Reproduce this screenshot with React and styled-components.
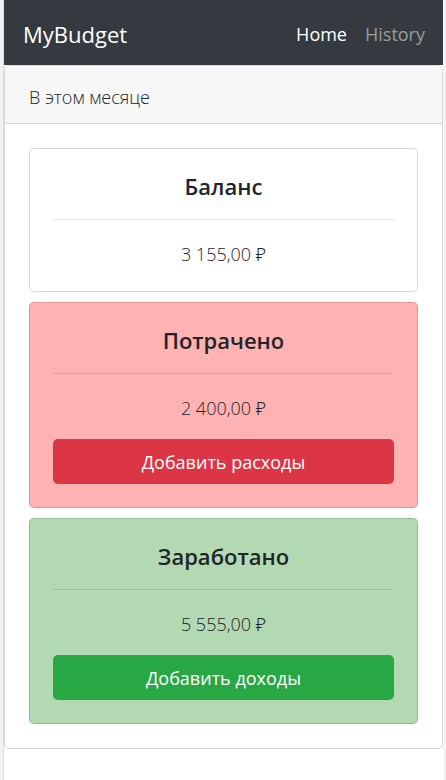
import React from "react";
import styled, { createGlobalStyle } from "styled-components";

const GlobalStyle = createGlobalStyle`
  *, *::before, *::after { box-sizing: border-box; }
  body {
    margin: 0;
    background: #f2f2f2;
    color: #212529;
    font-family: "Open Sans", "Noto Sans", sans-serif;
    font-size: 18px;
    font-weight: 300;
    line-height: 28px;
  }
`;

const Page = styled.div`
  min-height: 100vh;
  margin: 0 2px 0 3px;
  background: #fff;
  border-left: 1px solid #dcdcdc;
  border-right: 1px solid #fafafa;
`;

const Navbar = styled.nav`
  display: flex;
  align-items: center;
  justify-content: space-between;
  padding: 17px 18px 14px 19px;
  background: #343a40;
`;

const Brand = styled.a`
  color: #fff;
  font-size: 22px;
  font-weight: 400;
  line-height: 34px;
  text-decoration: none;
`;

const NavLinks = styled.div`
  display: flex;
  gap: 18px;
`;

const NavLink = styled.a`
  color: ${({ $active }) => ($active ? "#fff" : "#999c9f")};
  font-weight: 400;
  text-decoration: none;
`;

const Panel = styled.main`
  border: 1px solid #d8d8d8;
  border-radius: 5px;
  overflow: hidden;
`;

const PanelHeader = styled.header`
  padding: 17px 24px 12px;
  background: #f7f7f7;
  border-bottom: 1px solid #d8d8d8;
`;

const PanelBody = styled.div`
  display: flex;
  flex-direction: column;
  gap: 10px;
  padding: 24px;
`;

const SummaryCard = styled.section`
  padding: 24px 23px 23px;
  background: ${({ $background }) => $background};
  border: 1px solid rgba(0, 0, 0, 0.15);
  border-radius: 5px;
  text-align: center;
`;

const CardTitle = styled.h2`
  margin: 0;
  font-size: 22px;
  font-weight: 600;
  line-height: 27px;
`;

const Divider = styled.hr`
  margin: 19px 0 20px;
  border: 0;
  border-top: 1px solid rgba(0, 0, 0, 0.1);
`;

const Amount = styled.p`
  margin: 0;
`;

const ActionButton = styled.button`
  display: block;
  width: 100%;
  margin-top: 17px;
  padding: 9px 16px 7px;
  border: 0;
  border-radius: 5px;
  background: ${({ $color }) => $color};
  color: #fff;
  font: inherit;
  font-weight: 400;
  line-height: 29px;
  cursor: pointer;
`;

const cards = [
  { title: "Баланс", amount: "3 155,00 ₽", background: "#fff" },
  {
    title: "Потрачено",
    amount: "2 400,00 ₽",
    background: "#ffb2b2",
    action: "Добавить расходы",
    color: "#dc3545",
  },
  {
    title: "Заработано",
    amount: "5 555,00 ₽",
    background: "#b2d9b2",
    action: "Добавить доходы",
    color: "#28a745",
  },
];

export default function App() {
  return (
    <>
      <GlobalStyle />
      <Page>
        <Navbar>
          <Brand href="#">MyBudget</Brand>
          <NavLinks>
            <NavLink href="#home" $active>Home</NavLink>
            <NavLink href="#history">History</NavLink>
          </NavLinks>
        </Navbar>
        <Panel>
          <PanelHeader>В этом месяце</PanelHeader>
          <PanelBody>
            {cards.map((card) => (
              <SummaryCard key={card.title} $background={card.background}>
                <CardTitle>{card.title}</CardTitle>
                <Divider />
                <Amount>{card.amount}</Amount>
                {card.action && (
                  <ActionButton type="button" $color={card.color}>
                    {card.action}
                  </ActionButton>
                )}
              </SummaryCard>
            ))}
          </PanelBody>
        </Panel>
      </Page>
    </>
  );
}
